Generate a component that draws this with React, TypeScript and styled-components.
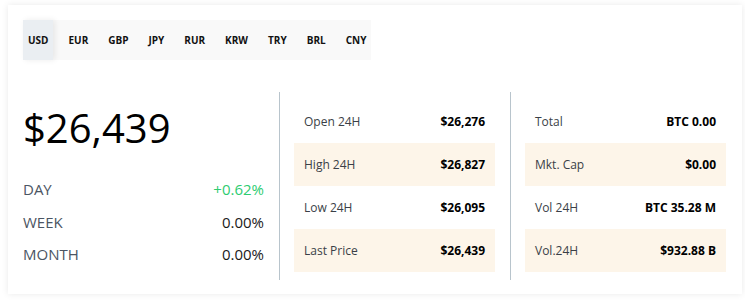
import styled, { createGlobalStyle } from 'styled-components';

const GlobalStyle = createGlobalStyle`
	body {
		margin: 0;
		background: #fff;
		font-family: "Open Sans", "Liberation Sans", sans-serif;
	}
`;

const Page = styled.div`
	padding: 5px 3px 8px 8px;
`;

const Card = styled.div`
	width: 734px;
	height: 289px;
	box-sizing: border-box;
	padding: 15px 16px 14px 15px;
	background: #fff;
	box-shadow: 0 0 7px rgba(0, 0, 0, 0.09);
`;

const Tabs = styled.div`
	display: flex;
	gap: 10px;
	width: max-content;
	height: 40px;
	background: #f9f9f9;
`;

const Tab = styled.div<{ $active?: boolean }>`
	display: flex;
	align-items: center;
	padding: 0 5px;
	font-size: 10px;
	font-weight: 700;
	color: #111;
	background: ${(p) => (p.$active ? '#eaeef2' : 'transparent')};
	box-shadow: ${(p) => (p.$active ? '2px 0 6px rgba(0, 0, 0, 0.08)' : 'none')};
	cursor: pointer;
`;

const Columns = styled.div`
	display: grid;
	grid-template-columns: 256px 231px 1fr;
	margin-top: 32px;
	height: 188px;
`;

const Summary = styled.div`
	padding: 11.5px 15px 0 0;
`;

const Price = styled.div`
	font-size: 40px;
	line-height: 48px;
	color: #000;
	margin-bottom: 21.7px;
`;

const ChangeRow = styled.div`
	display: flex;
	justify-content: space-between;
	font-size: 15px;
	line-height: 32.5px;
	color: #4b5563;
`;

const ChangeValue = styled.span<{ $up?: boolean }>`
	color: ${(p) => (p.$up ? '#2ecc71' : '#1a1a1a')};
`;

const Stats = styled.div`
	border-left: 1px solid #b8c4cc;
	padding: 8px 15px 8px 14px;

	&:last-child {
		padding-right: 0;
	}
`;

const StatRow = styled.div<{ $shade?: boolean }>`
	display: flex;
	justify-content: space-between;
	align-items: center;
	height: 43px;
	padding: 0 10px;
	font-size: 12px;
	background: ${(p) => (p.$shade ? '#fdf5e9' : 'transparent')};
`;

const StatLabel = styled.span`
	color: #3a3f47;
`;

const StatValue = styled.span`
	font-weight: 700;
	color: #000;
`;

const currencies = ['USD', 'EUR', 'GBP', 'JPY', 'RUR', 'KRW', 'TRY', 'BRL', 'CNY'];

const changes = [
	{ label: 'DAY', value: '+0.62%', up: true },
	{ label: 'WEEK', value: '0.00%' },
	{ label: 'MONTH', value: '0.00%' },
];

const market = [
	['Open 24H', '$26,276'],
	['High 24H', '$26,827'],
	['Low 24H', '$26,095'],
	['Last Price', '$26,439'],
];

const volume = [
	['Total', 'BTC 0.00'],
	['Mkt. Cap', '$0.00'],
	['Vol 24H', 'BTC 35.28 M'],
	['Vol.24H', '$932.88 B'],
];

function StatTable({ rows }: { rows: string[][] }) {
	return (
		<Stats>
			{rows.map(([label, value], i) => (
				<StatRow key={label} $shade={i % 2 === 1}>
					<StatLabel>{label}</StatLabel>
					<StatValue>{value}</StatValue>
				</StatRow>
			))}
		</Stats>
	);
}

export default function App() {
	return (
		<Page>
			<GlobalStyle />
			<Card>
				<Tabs>
					{currencies.map((c) => (
						<Tab key={c} $active={c === 'USD'}>
							{c}
						</Tab>
					))}
				</Tabs>
				<Columns>
					<Summary>
						<Price>$26,439</Price>
						{changes.map((c) => (
							<ChangeRow key={c.label}>
								<span>{c.label}</span>
								<ChangeValue $up={c.up}>{c.value}</ChangeValue>
							</ChangeRow>
						))}
					</Summary>
					<StatTable rows={market} />
					<StatTable rows={volume} />
				</Columns>
			</Card>
		</Page>
	);
}
